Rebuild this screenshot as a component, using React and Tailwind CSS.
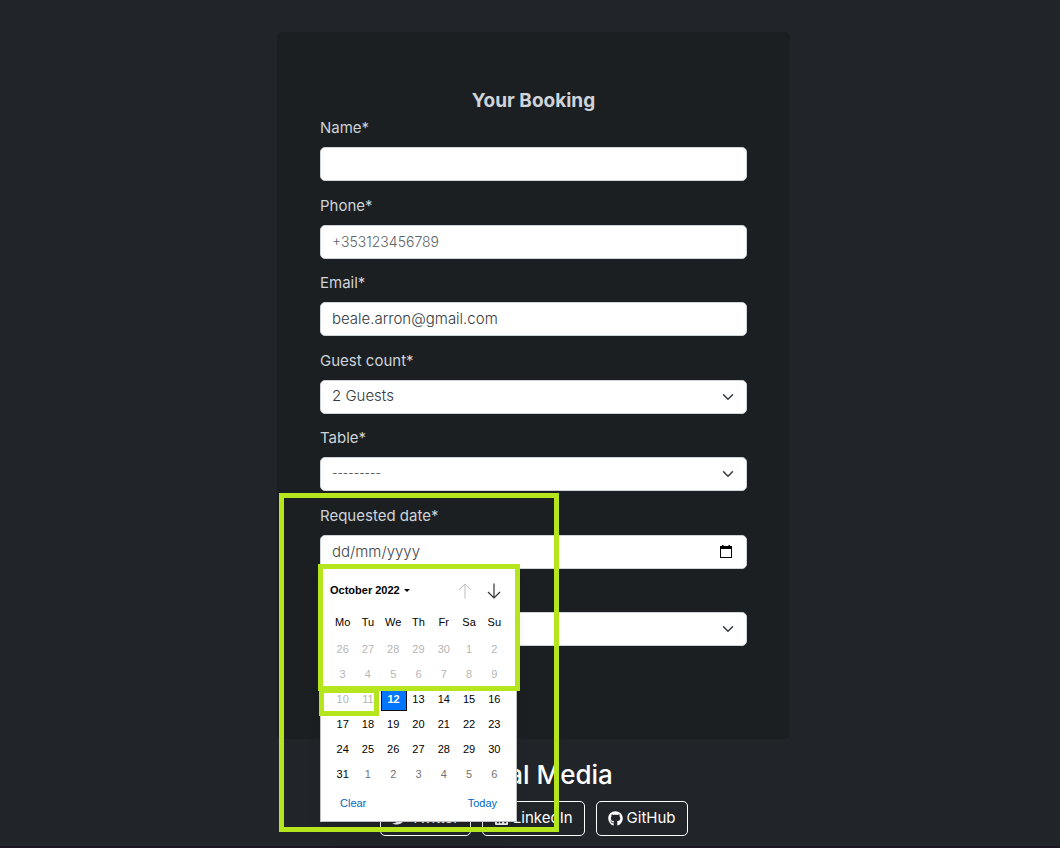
import { FaTwitter, FaLinkedin, FaGithub } from "react-icons/fa";

const label = "block h-5 text-[15px] leading-5 text-[#ced4da]";
const box =
  "block h-[34px] w-full appearance-none rounded-[5px] border border-[#ced4da] bg-white px-[11px] pb-[2px] font-light text-[#343a40] outline-none";
const control = `${box} text-[15px] placeholder:text-[#40464c]`;
const phoneControl = `${box} text-[14px] placeholder:text-[#5c636a]`;
const emptyControl = `${box} text-[12px]`;

function Field({ id, text, children }) {
  return (
    <div className="relative odd:pb-[15px] even:pb-[14px]">
      <label htmlFor={id} className={label}>{text}</label>
      <div className="relative mt-[9px]">{children}</div>
    </div>
  );
}

function Select({ id, value, className = control }) {
  return (
    <>
      <select id={id} className={className} defaultValue={value}>
        <option>{value}</option>
      </select>
      <svg className="pointer-events-none absolute right-[13px] top-[11px] size-3" viewBox="0 0 16 16" fill="none" stroke="#343a40" strokeWidth="2" strokeLinecap="round" strokeLinejoin="round">
        <path d="m2 5 6 6 6-6" />
      </svg>
    </>
  );
}

const weeks = [
  [26, 27, 28, 29, 30, 1, 2],
  [3, 4, 5, 6, 7, 8, 9],
  [10, 11, 12, 13, 14, 15, 16],
  [17, 18, 19, 20, 21, 22, 23],
  [24, 25, 26, 27, 28, 29, 30],
  [31, 1, 2, 3, 4, 5, 6],
];

function dayClass(index) {
  if (index < 16) return "h-full w-full text-[#b5b5b5]";
  if (index === 16) return "h-[23px] w-[26px] border border-[#101010] bg-[#0075ff] font-bold text-white";
  if (index > 35) return "h-full w-full text-[#757575]";
  return "h-full w-full text-black";
}

function Calendar() {
  return (
    <div className="absolute left-0 top-[62px] z-10 w-[197px] border border-[#bfbfbf] bg-white pb-2 font-['Liberation_Sans',sans-serif] text-[11px] text-black shadow-lg">
      <div className="flex h-[41px] items-center justify-between pl-[9px] pr-[15px] pt-[2px]">
        <button type="button" className="flex items-center gap-1 text-[11px] font-bold">
          October 2022
          <svg className="h-[3px] w-[6px]" viewBox="0 0 6 3"><path d="M0 0h6L3 3z" /></svg>
        </button>
        <div className="flex gap-[15px]">
          <button type="button" aria-label="Previous month">
            <svg className="h-4 w-[14px]" viewBox="0 0 14 16" fill="none" stroke="#bdbdbd"><path d="M7 15.500V1M1 7l6-6 6 6" /></svg>
          </button>
          <button type="button" aria-label="Next month">
            <svg className="h-4 w-[14px]" viewBox="0 0 14 16" fill="none" stroke="#333" strokeWidth="1.200"><path d="M7 .5V15M1 9l6 6 6-6" /></svg>
          </button>
        </div>
      </div>
      <table className="ml-[9px] w-[177px] table-fixed border-collapse text-center">
        <thead>
          <tr className="h-[27px]">
            {["Mo", "Tu", "We", "Th", "Fr", "Sa", "Su"].map((d) => (
              <th key={d} className="p-0 align-top font-normal leading-6">{d}</th>
            ))}
          </tr>
        </thead>
        <tbody>
          {weeks.map((week, w) => (
            <tr key={w} className="h-[25px]">
              {week.map((day, d) => (
                <td key={d} className="p-0">
                  <button type="button" className={dayClass(w * 7 + d)}>{day}</button>
                </td>
              ))}
            </tr>
          ))}
        </tbody>
      </table>
      <div className="mt-[6px] flex h-[20px] items-center justify-between px-[19px] text-[#0067c0]">
        <button type="button">Clear</button>
        <button type="button">Today</button>
      </div>
      <div className="pointer-events-none absolute -left-[3px] -top-[5px] h-[127px] w-[202px] border-[5px] border-[#b5e61d]" />
      <div className="pointer-events-none absolute -left-[2px] top-[119px] h-[28px] w-[60px] border-[5px] border-[#b5e61d]" />
    </div>
  );
}

function Social({ icon: Icon, children }) {
  return (
    <a href="#" className="flex h-[35px] items-center gap-1 rounded-[5px] border border-white px-[11px] text-[15px] text-white">
      <Icon className="size-[15px]" />
      {children}
    </a>
  );
}

export default function App() {
  return (
    <div className="min-h-screen bg-[#212529] pt-8 font-['Inter',sans-serif]">
      <div className="pl-[7px]">
        <main className="mx-auto w-full max-w-[513px] rounded-[5px] bg-[#1b1f21] px-[43px] pb-[78px] pt-[57px]">
          <h1 className="h-[29px] text-center text-[19px] font-bold leading-6 text-[#ced4da]">Your Booking</h1>
          <form>
            <Field id="name" text="Name*">
              <input id="name" type="text" className={control} />
            </Field>
            <Field id="phone" text="Phone*">
              <input id="phone" type="tel" placeholder="+353123456789" className={phoneControl} />
            </Field>
            <Field id="email" text="Email*">
              <input id="email" type="email" defaultValue="beale.arron@gmail.com" className={control} />
            </Field>
            <Field id="guests" text="Guest count*"><Select id="guests" value="2 Guests" /></Field>
            <Field id="table" text="Table*"><Select id="table" value="---------" className={emptyControl} /></Field>
            <div className="relative pb-[14px]">
              <label htmlFor="date" className={label}>Requested date*</label>
              <div className="relative mt-[9px]">
                <input id="date" type="text" placeholder="dd/mm/yyyy" className={control} />
                <button type="button" aria-label="Open calendar" className="absolute right-[15px] top-[10px]">
                  <svg className="h-[13px] w-3" viewBox="0 0 12 13"><path fillRule="evenodd" d="M2 0h1.500v1h5V0H10v1h2v12H0V1h2zM1 4v8h10V4z" /></svg>
                </button>
              </div>
              <Calendar />
              <div className="pointer-events-none absolute -left-[41px] -top-[13px] z-20 h-[339px] w-[280px] border-[5px] border-[#b5e61d]" />
            </div>
            <Field id="time" text="Requested time*"><Select id="time" value="12:00" /></Field>
          </form>
        </main>
      </div>
      <footer className="border-b-2 border-[#1b1822] pb-[10px] pl-[7px] pt-[17px] text-center text-white">
        <h2 className="text-[26px] font-medium leading-[38px]">Social Media</h2>
        <nav className="mt-[7px] flex justify-center gap-[11px]">
          <Social icon={FaTwitter}>Twitter</Social>
          <Social icon={FaLinkedin}>LinkedIn</Social>
          <Social icon={FaGithub}>GitHub</Social>
        </nav>
      </footer>
    </div>
  );
}
